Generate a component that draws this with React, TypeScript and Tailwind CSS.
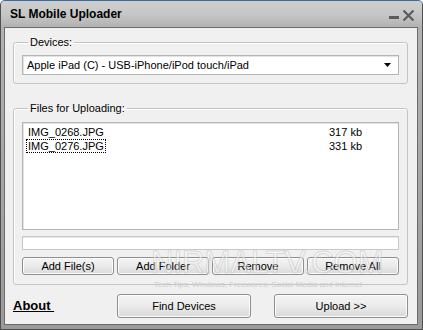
const files = [
  { name: 'IMG_0268.JPG', size: '317 kb', focused: false },
  { name: 'IMG_0276.JPG', size: '331 kb', focused: true },
];

function WinButton({ label, className = '' }: { label: string; className?: string }) {
  return (
    <button
      className={`flex items-center justify-center rounded-[3px] border border-[#8e8f8f] bg-gradient-to-b from-[#f4f4f4] via-[#ebebeb] to-[#d9d9d9] text-[11px] text-black shadow-[inset_0_0_0_1px_#fcfcfc] ${className}`}
    >
      {label}
    </button>
  );
}

export default function App() {
  return (
    <div className="relative flex h-[330px] w-[423px] flex-col overflow-hidden rounded-t-[5px] border border-[#4f4f4f] border-t-[#3d6c9c] bg-gradient-to-b from-[#b4b4b4] to-[#9a9a9a] font-['Tahoma','Liberation_Sans',sans-serif] text-[11px] text-black">
      {/* Title bar */}
      <div className="flex h-[26px] items-center bg-gradient-to-b from-[#cfcfcf] via-[#c6c6c6] to-[#b3b3b3] pl-[9px] pr-[7px]">
        <span className="text-[12px] font-bold text-black">SL Mobile Uploader</span>
        <div className="ml-auto flex items-end gap-[3px] pt-[2px]">
          <span className="mb-[3px] block h-[3px] w-[10px] bg-[#5c5c5c]" />
          <svg width="13" height="13" viewBox="0 0 13 13">
            <path d="M1.5 1.5 L11.5 11.5 M11.5 1.5 L1.5 11.5" stroke="#5c5c5c" strokeWidth="2.2" />
          </svg>
        </div>
      </div>

      {/* Client area */}
      <div className="mb-[4px] ml-[3px] mr-[4px] flex flex-1 flex-col border border-[#6c6c6c] bg-[#f0f0f0] pl-[8px] pr-[9px] pt-[8px]">
        <fieldset className="rounded-[3px] border border-[#c4c4c4] px-[8px] pb-[8px] pt-[6px] shadow-[inset_1px_1px_0_#ffffff]">
          <legend className="ml-[6px] px-[2px] leading-[13px]">Devices:</legend>
          <div className="flex h-[20px] items-center border border-[#b5b5b5] bg-white pl-[4px] pr-[7px] shadow-[inset_1px_1px_0_#e3e3e3]">
            <span>Apple iPad (C) - USB-iPhone/iPod touch/iPad</span>
            <svg className="ml-auto" width="7" height="4" viewBox="0 0 7 4">
              <path d="M0 0 H7 L3.5 4 Z" fill="#000" />
            </svg>
          </div>
        </fieldset>

        <fieldset className="mt-[18px] rounded-[3px] border border-[#c4c4c4] px-[8px] pb-[9px] pt-[7px] shadow-[inset_1px_1px_0_#ffffff]">
          <legend className="ml-[6px] px-[2px] leading-[13px]">Files for Uploading:</legend>
          <div className="flex h-[108px] flex-col border border-[#b5b5b5] bg-white pt-[2px] shadow-[inset_1px_1px_0_#e3e3e3]">
            {files.map((f) => (
              <div key={f.name} className="flex h-[14px] items-center">
                <span
                  className={`ml-[3px] flex h-[14px] w-[80px] items-center pl-[1px] ${
                    f.focused ? 'border border-dotted border-black' : 'border border-transparent'
                  }`}
                >
                  {f.name}
                </span>
                <span className="ml-[223px]">{f.size}</span>
              </div>
            ))}
          </div>
          <div className="mt-[6px] h-[14px] border border-[#c8c8c8] bg-white shadow-[inset_0_1px_0_#e6e6e6]" />
          <div className="mt-[7px] flex gap-[3px]">
            <WinButton label="Add File(s)" className="h-[18px] w-[92px]" />
            <WinButton label="Add Folder" className="h-[18px] w-[92px]" />
            <WinButton label="Remove" className="h-[18px] w-[92px]" />
            <WinButton label="Remove All" className="h-[18px] flex-1" />
          </div>
        </fieldset>

        <div className="mt-[9px] flex items-center">
          <span className="flex-1 text-[13px] font-bold underline">About&nbsp;</span>
          <WinButton label="Find Devices" className="h-[24px] w-[134px]" />
          <WinButton label="Upload >>" className="ml-[23px] h-[24px] w-[134px]" />
        </div>
      </div>

      {/* Watermark */}
      <div className="pointer-events-none absolute left-[150px] top-[246px] text-[31px] leading-[32px] text-white/45 [-webkit-text-stroke:1px_rgba(150,150,150,0.3)]">
        NIRMALTV.COM
      </div>
      <div className="pointer-events-none absolute left-[153px] top-[279px] text-[8px] leading-[9px] text-[#cccccc]">
        Tech Tips, Windows, Freewares, Social Media and Internet
      </div>
    </div>
  );
}
